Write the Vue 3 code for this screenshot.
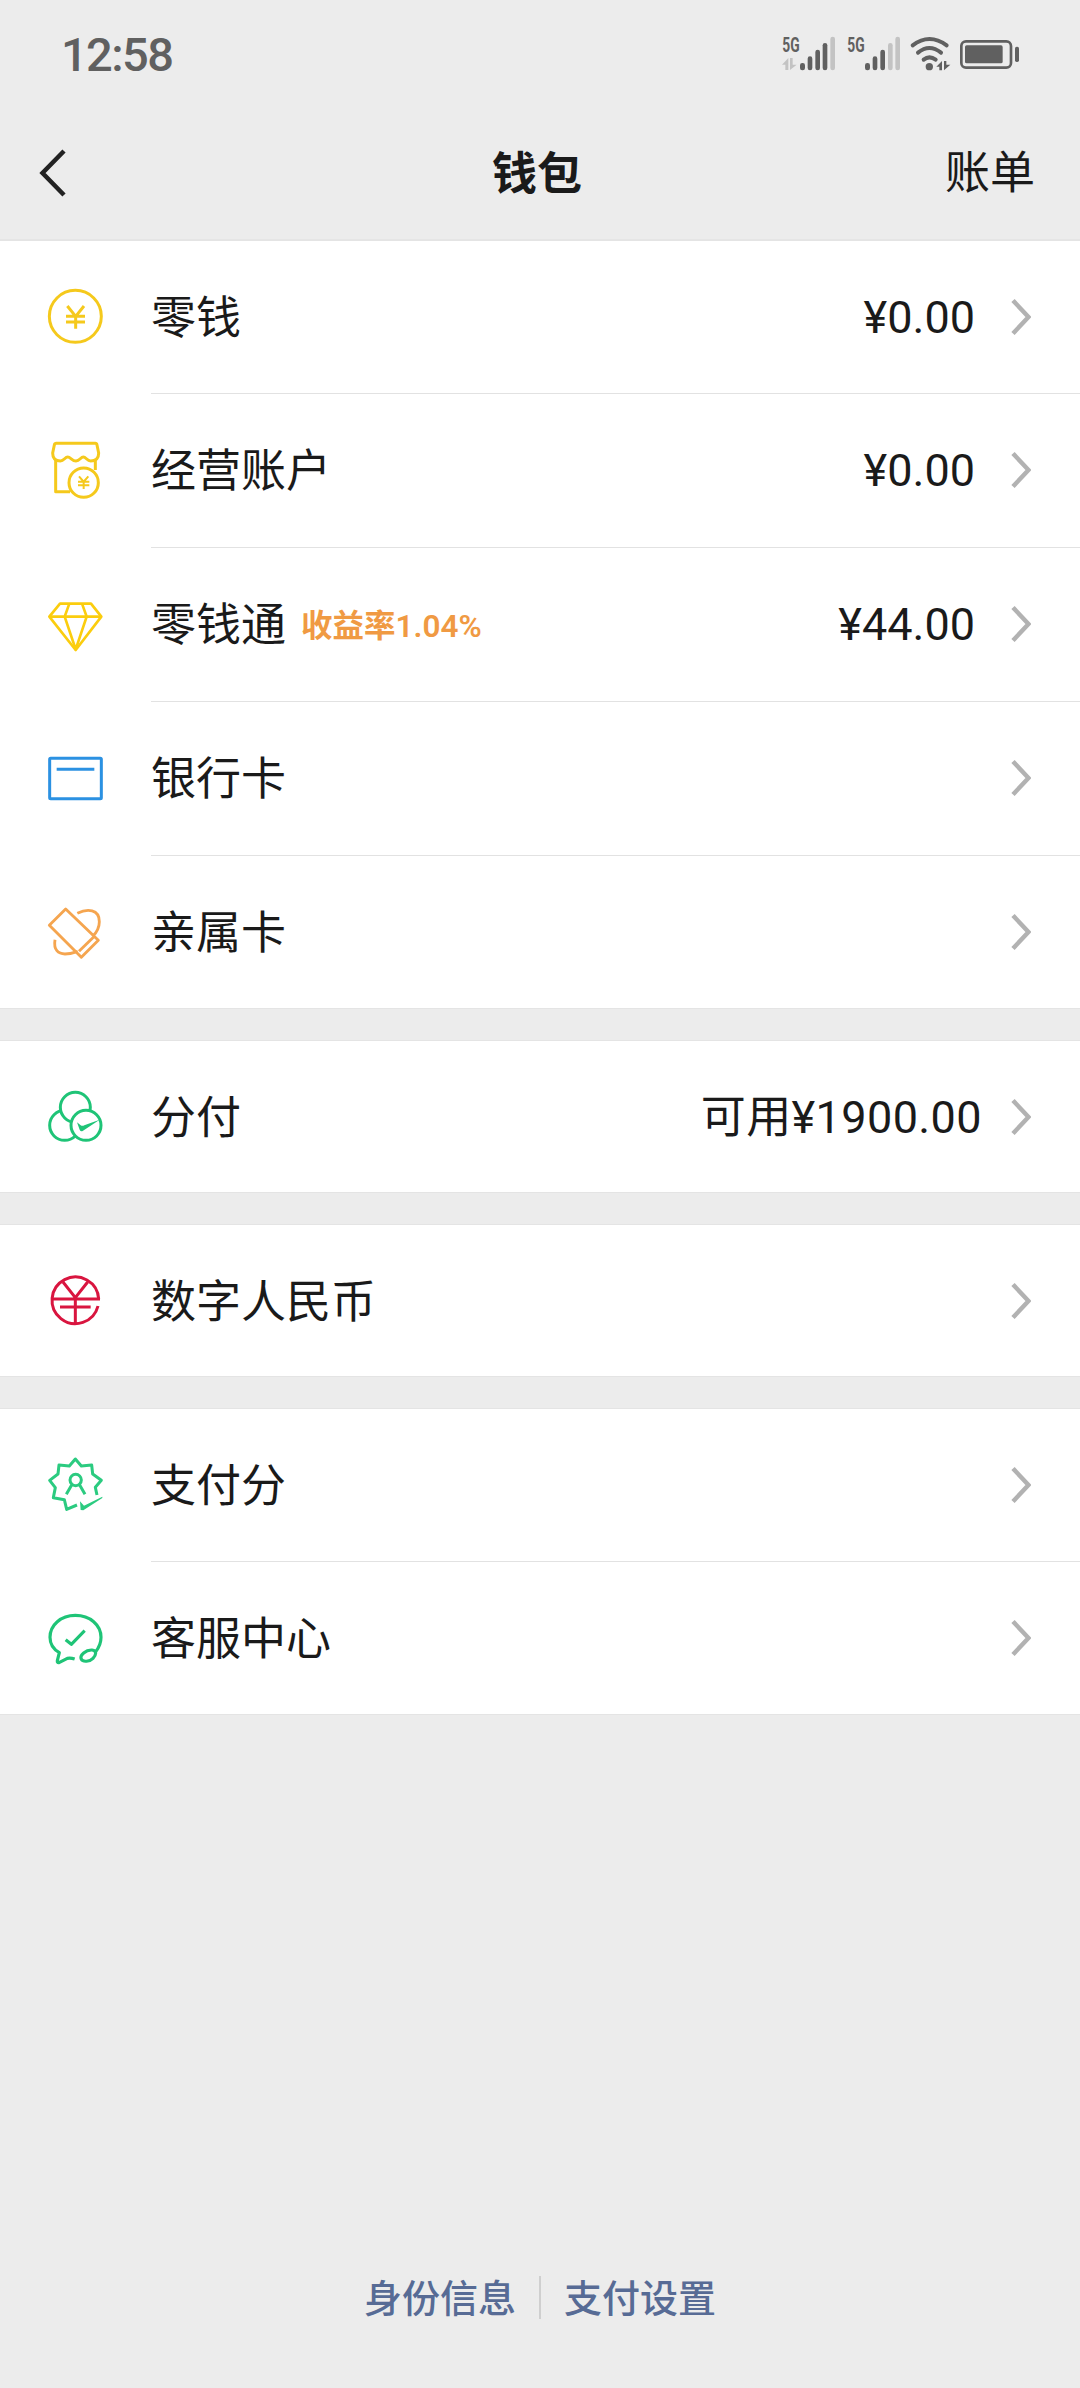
<script setup>
const YELLOW = '#f5c91c'
const GREEN = '#1fc477'

const groups = [
  [
    {
      label: '零钱', amount: '¥0.00', color: YELLOW, box: '42 45 192 192', width: 9,
      strokes: ['M58 139a78 78 0 1 0 156 0a78 78 0 1 0-156 0', 'M112 108L137 139L162 108M137 139V176M108 139H165M108 156H165'],
    },
    {
      label: '经营账户', amount: '¥0.00', color: YELLOW, box: '42 504 192 192', width: 9,
      strokes: [
        'M79 520H196Q200 520 201 525L206 549C206 568 194 573 182 573C171 573 168 561 160 561C152 561 149 573 138 573C126 573 122 561 113 561C105 561 102 573 91 573C78 573 68 566 68 549L73 525Q74 520 79 520Z',
        'M77 568V665H120M196 568V600',
        'M117 638a44 44 0 1 0 88 0a44 44 0 1 0-88 0',
      ],
      thin: 'M147 619L161 635L175 619M161 635V657M144 635H178M144 646H178',
    },
    {
      label: '零钱通', note: '收益率1.04%', amount: '¥44.00', color: '#fbcd0e', box: '42 96 192 192', width: 8,
      strokes: ['M90 131H183L214 170L137 270L58 170Z', 'M58 170H214M118 131L104 170L137 268L170 170L156 131'],
    },
    {
      label: '银行卡', color: '#2b91e2', box: '42 558 192 192', width: 9,
      strokes: ['M62 595H211Q214 595 214 598V713Q214 716 211 716H62Q59 716 59 713V598Q59 595 62 595Z', 'M80 628H193'],
    },
    {
      label: '亲属卡', color: '#f5a54f', box: '42 90 192 192', width: 8.5,
      strokes: [
        'M107 117L58 166L154 262L205 211Z',
        'M191 201L147 244',
        'M142 130C172 115 208 117 208 155C208 173 200 187 188 199M75 209C70 240 85 252 105 252C123 252 134 247 143 244',
      ],
    },
  ],
  [
    {
      label: '分付', amount: '可用¥1900.00', wide: true, color: GREEN, box: '42 75 192 192', width: 9,
      strokes: [
        'M59 196a45 45 0 1 0 90 0a45 45 0 1 0-90 0',
        'M91 142a45 45 0 1 0 90 0a45 45 0 1 0-90 0',
        'M123 196a45 45 0 1 0 90 0a45 45 0 1 0-90 0',
      ],
      solid: 'M141 187L152 196Q157 199 163 196L209 179L158 213Q152 216 149 209Z',
    },
  ],
  [
    {
      label: '数字人民币', color: '#d9153f', box: '42 627 192 192', width: 9,
      strokes: ['M206 717A70 70 0 1 0 204 738', 'M67 717H210M99 666L136 713L173 666M136 713V792M90 741H182'],
    },
  ],
  [
    {
      label: '支付分', color: '#2bcb80', box: '42 249 192 192', width: 9,
      strokes: [
        'M141 405L110 418L103 389L70 383L76 353L59 331L84 312L87 285L118 288L136 267L154 288L185 285L188 312L214 331L196 352L201 375',
        'M120 330a17 17 0 1 0 34 0a17 17 0 1 0-34 0M125 345L109 373M149 345L165 373',
      ],
      solid: 'M150 394L162 407L217 380V384L160 421L152 420Z',
    },
    {
      label: '客服中心', color: GREEN, box: '42 108 192 192', width: 9.5,
      strokes: [
        'M134 267Q122 263 112 265L87 278Q81 279 82 272L88 248C70 238 60 222 60 202C60 165 93 136 136 136C180 136 213 165 213 202C213 220 207 233 197 245',
        'M107 209L124 223L164 182',
        'M154 268C148 255 168 239 186 240C202 242 198 256 189 265C179 275 159 277 154 268Z',
      ],
    },
  ],
]
</script>

<template>
  <div class="screen">
    <header class="status">
      <span class="clock">12:58</span>
      <svg class="indicators" viewBox="0 0 840 210">
        <g fill="#606060">
          <text x="67" y="95" class="net" textLength="52" lengthAdjust="spacingAndGlyphs">5G</text>
          <text x="262" y="95" class="net" textLength="52" lengthAdjust="spacingAndGlyphs">5G</text>
          <rect x="120" y="129" width="15" height="22" rx="7" />
          <rect x="143" y="109" width="14" height="42" rx="7" />
          <rect x="166" y="89" width="14" height="62" rx="7" />
          <rect x="188" y="69" width="14" height="82" rx="7" />
          <rect x="315" y="129" width="15" height="22" rx="7" />
          <rect x="338" y="109" width="14" height="42" rx="7" />
          <rect x="361" y="89" width="14" height="62" rx="7" />
          <circle cx="508" cy="140" r="11" />
          <path d="M546 123V151H538V140H529ZM552 151V123H559V134H571Z" />
          <rect x="615" y="76" width="113" height="54" rx="5" />
          <rect x="765" y="80" width="12" height="46" rx="5" />
        </g>
        <g fill="#c3c3c3">
          <path d="M85 114V150H76V134H66ZM90 150V114H98V134H110Z" />
          <rect x="211" y="50" width="14" height="101" rx="7" />
          <rect x="384" y="69" width="14" height="82" rx="7" />
          <rect x="406" y="50" width="14" height="101" rx="7" />
        </g>
        <g fill="none" stroke="#606060" stroke-linecap="round">
          <path stroke-width="12" d="M458 76Q508 38 560 76M474 98Q508 70 543 98M491 119Q508 105 527 119" />
          <rect stroke-width="8" x="604" y="64" width="149" height="79" rx="14" />
        </g>
      </svg>
    </header>

    <nav class="nav">
      <svg class="back" viewBox="0 0 28 50"><path d="M25 3L3.500 25L25 47" /></svg>
      <h1>钱包</h1>
      <span class="bill">账单</span>
    </nav>

    <main>
      <section v-for="(rows, g) in groups" :key="g" class="group">
        <div v-for="row in rows" :key="row.label" class="row">
          <svg class="icon" :viewBox="row.box">
            <path
              v-for="d in row.strokes" :key="d" :d="d" :stroke="row.color" :stroke-width="row.width"
              :fill="row.label === '分付' ? '#fff' : 'none'" stroke-linejoin="round"
            />
            <path v-if="row.thin" :d="row.thin" :stroke="row.color" stroke-width="6" fill="none" />
            <path v-if="row.solid" :d="row.solid" :fill="row.color" />
          </svg>
          <div class="cell">
            <span class="label">{{ row.label }}</span>
            <span v-if="row.note" class="note">{{ row.note }}</span>
            <span v-if="row.amount" class="amount" :class="{ wide: row.wide }">{{ row.amount }}</span>
            <svg class="arrow" viewBox="0 0 20 38"><path d="M2 2.500L17.500 19L2 35.500" /></svg>
          </div>
        </div>
      </section>
    </main>

    <footer class="footer">
      <span>身份信息</span>
      <i></i>
      <span>支付设置</span>
    </footer>
  </div>
</template>

<style>
body {
  margin: 0;
  background: #ececec;
}
</style>

<style scoped>
.screen {
  display: flex;
  flex-direction: column;
  box-sizing: border-box;
  width: 1080px;
  height: 2388px;
  background: #ececec;
  color: #1a1a1a;
  font-family: Roboto, "Noto Sans CJK SC", sans-serif;
}
.status {
  display: flex;
  justify-content: space-between;
  height: 108px;
  padding: 20px 40px 0 61px;
  box-sizing: border-box;
}
.clock {
  color: #606060;
  font-size: 47px;
  font-weight: 500;
  letter-spacing: -1.6px;
  line-height: 70px;
}
.indicators {
  width: 280px;
  height: 70px;
}
.net {
  font: 700 60px Roboto, sans-serif;
}
.nav {
  display: grid;
  grid-template-columns: 1fr auto 1fr;
  align-items: center;
  height: 133px;
  padding: 0 45px 2px 39px;
  box-sizing: border-box;
  border-bottom: 2px solid #e5e5e5;
}
.back {
  width: 28px;
  height: 50px;
  fill: none;
  stroke: #222;
  stroke-width: 4.500;
}
h1 {
  margin: 0;
  padding-top: 4px;
  font-size: 45px;
  font-weight: 700;
  line-height: 60px;
}
.bill {
  justify-self: end;
  padding-top: 3px;
  font-size: 45px;
  line-height: 60px;
}
.group {
  height: 151px;
  margin-bottom: 33px;
  background: #fff;
  box-shadow: 0 -1px #e4e4e4, 0 1px #e4e4e4;
}
.group:first-child {
  height: 767px;
}
.group:last-child {
  height: 305px;
}
.row {
  display: flex;
  height: 154px;
}
.row:first-child {
  height: 153px;
}
.row:last-child {
  height: 151px;
}
.icon {
  flex: none;
  width: 64px;
  height: 64px;
  margin: 44px 43px 0 44px;
}
.cell {
  flex: 1;
  display: flex;
  align-items: flex-start;
  padding-right: 49px;
  border-bottom: 1px solid #e2e2e2;
}
.row:last-child .cell {
  border-bottom: 0;
}
.label {
  font-size: 45px;
  line-height: 60px;
  margin-top: 48px;
}
.note {
  margin: 48px 0 0 15px;
  color: #f09a43;
  font-size: 31.500px;
  font-weight: 600;
  line-height: 62px;
}
.amount {
  margin: 47px 36px 0 auto;
  font-size: 45px;
  line-height: 60px;
}
.amount.wide {
  margin-right: 29px;
  letter-spacing: 0.4px;
}
.arrow {
  width: 20px;
  height: 38px;
  margin: 57px 0 0 auto;
  fill: none;
  stroke: #b2b2b2;
  stroke-width: 4.500;
}
.amount + .arrow {
  margin-left: 0;
}
.footer {
  display: flex;
  align-items: center;
  justify-content: center;
  gap: 23px;
  margin-top: auto;
  padding-bottom: 61px;
  color: #576b95;
  font-size: 38px;
  font-weight: 500;
  line-height: 60px;
}
.footer span {
  padding-top: 2px;
  margin-bottom: -2px;
}
.footer i {
  width: 2px;
  height: 43px;
  background: #cfcfcf;
}
</style>
